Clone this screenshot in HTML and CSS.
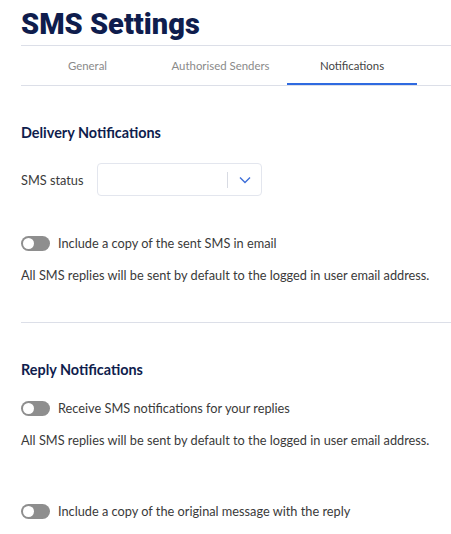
FILE: index.html
```html
<!DOCTYPE html>
<html lang="en">
<head>
    <meta charset="UTF-8">
    <meta name="viewport" content="width=device-width, initial-scale=1.0">
    <title>SMS Settings</title>
    <link rel="stylesheet" href="styles.css">
</head>
<body>

<div class="page">
    <h1>SMS Settings</h1>

    <nav class="tabs">
        <a href="#" class="tab">General</a>
        <a href="#" class="tab">Authorised Senders</a>
        <a href="#" class="tab active">Notifications</a>
    </nav>

    <section class="section">
        <h2>Delivery Notifications</h2>
        <div class="field">
            <label>SMS status</label>
            <div class="select">
                <span class="select-value"></span>
                <span class="select-sep"></span>
                <svg class="select-arrow" width="12" height="8" viewBox="0 0 12 8">
                    <path d="M1 1.5 L6 6.5 L11 1.5" fill="none" stroke="#3f6fd8" stroke-width="1.4"/>
                </svg>
            </div>
        </div>
        <div class="toggle-row">
            <span class="toggle"></span>
            <span>Include a copy of the sent SMS in email</span>
        </div>
        <p class="note">All SMS replies will be sent by default to the logged in user email address.</p>
    </section>

    <hr class="divider">

    <section class="section">
        <h2>Reply Notifications</h2>
        <div class="toggle-row">
            <span class="toggle"></span>
            <span>Receive SMS notifications for your replies</span>
        </div>
        <p class="note">All SMS replies will be sent by default to the logged in user email address.</p>
        <div class="toggle-row spaced">
            <span class="toggle"></span>
            <span>Include a copy of the original message with the reply</span>
        </div>
    </section>
</div>

</body>
</html>
```

FILE: styles.css
```css
body {
    font-family: Lato, "Open Sans", sans-serif;
    margin: 0;
    padding: 0;
    background-color: #fff;
    color: #3a3a3a;
}
.page {
    padding: 6px 0 0 21px;
}
h1 {
    font-family: Roboto, Arial, sans-serif;
    font-weight: 900;
    font-size: 29px;
    color: #0f1d4d;
    margin: 0;
    height: 39px;
    line-height: 36px;
}
.tabs {
    display: flex;
    border-top: 1px solid #dcdfe8;
    border-bottom: 1px solid #dcdfe8;
    height: 39px;
}
.tab {
    width: 133px;
    text-align: center;
    font-size: 11.4px;
    line-height: 40px;
    color: #8a8a8a;
    text-decoration: none;
    box-sizing: border-box;
}
.tab.active {
    color: #444;
    width: 130px;
    border-bottom: 2px solid #2f6ae0;
}
.section {
    padding-top: 37px;
}
h2 {
    font-family: Lato, Arial, sans-serif;
    font-weight: 700;
    font-size: 14.4px;
    color: #0f1d4d;
    margin: 0 0 20px 0;
    line-height: 20px;
}
.field {
    display: flex;
    align-items: center;
    font-size: 12.75px;
}
.field label {
    width: 76px;
}
.select {
    width: 165px;
    height: 33px;
    border: 1px solid #e3e6ee;
    border-radius: 4px;
    box-sizing: border-box;
    display: flex;
    align-items: center;
}
.select-value {
    flex: 1;
}
.select-sep {
    width: 1px;
    height: 16px;
    background-color: #d8dbe3;
}
.select-arrow {
    margin: 0 10px 0 11px;
}
.toggle-row {
    display: flex;
    align-items: center;
    gap: 8px;
    font-size: 12.75px;
    margin-top: 39px;
}
.toggle {
    position: relative;
    width: 29px;
    height: 15px;
    border-radius: 8px;
    background-color: #8e8e8e;
}
.toggle::after {
    content: "";
    position: absolute;
    left: 2px;
    top: 2px;
    width: 11px;
    height: 11px;
    border-radius: 50%;
    background-color: #fff;
}
.section h2 + .toggle-row {
    margin-top: 0;
}
.note {
    font-size: 12.75px;
    margin: 16px 0 0 0;
}
.toggle-row.spaced {
    margin-top: 55px;
}
.divider {
    border: none;
    border-top: 1px solid #dcdfe8;
    margin: 39px 0 0 0;
}
```
